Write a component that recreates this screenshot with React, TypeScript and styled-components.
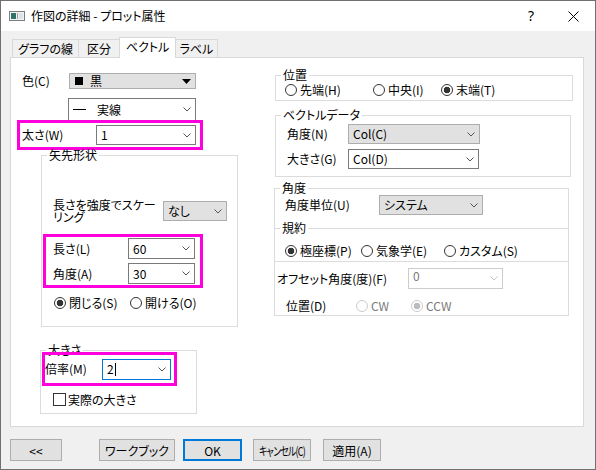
import React from "react";
import styled, { createGlobalStyle, css } from "styled-components";

type Tone = "gray" | "white" | "disabled" | "focus";

const GlobalStyle = createGlobalStyle`
  html, body {
    margin: 0;
    padding: 0;
    background: #ffffff;
  }
  body {
    font-family: "Noto Sans CJK JP", "Noto Sans", sans-serif;
    font-size: 12px;
    color: #000;
    font-feature-settings: "palt";
  }
  * {
    box-sizing: border-box;
  }
`;

const Window = styled.div`
  width: 596px;
  height: 470px;
  border: 1px solid #707070;
  background: #f0f0f0;
  display: flex;
  flex-direction: column;
`;

const TitleBar = styled.div`
  height: 30px;
  flex-shrink: 0;
  background: #ffffff;
  display: flex;
  align-items: center;
`;

const IconSvg = styled.svg`
  margin-left: 8px;
  flex-shrink: 0;
`;

const Title = styled.span`
  margin-left: 6px;
  font-size: 12px;
  line-height: 14px;
`;

const HelpGlyph = styled.span`
  margin-left: auto;
  font-family: "Noto Sans", sans-serif;
  font-size: 14px;
  line-height: 14px;
`;

const CloseSvg = styled.svg`
  margin: 0 16px 0 34px;
  flex-shrink: 0;
`;

const Body = styled.div`
  flex: 1;
  display: flex;
  flex-direction: column;
  padding: 6px 0 0 9px;
`;

const TabStrip = styled.div`
  height: 20px;
  display: flex;
  align-items: flex-end;
  padding-left: 2px;
`;

const Tab = styled.div<{ $w: number; $active?: boolean }>`
  width: ${(p) => p.$w}px;
  height: 18px;
  margin-left: -1px;
  border: 1px solid #d9d9d9;
  border-bottom: none;
  background: #f0f0f0;
  display: flex;
  align-items: center;
  justify-content: center;
  line-height: 14px;
  white-space: nowrap;

  &:first-child {
    margin-left: 0;
  }

  ${(p) =>
    p.$active &&
    css`
      position: relative;
      z-index: 1;
      height: 21px;
      margin-bottom: -1px;
      padding-bottom: 3px;
      background: #ffffff;
    `}
`;

const Panel = styled.div`
  width: 574px;
  height: 370px;
  border: 1px solid #d9d9d9;
  background: #ffffff;
  display: flex;
`;

const LeftCol = styled.div`
  width: 263px;
  flex-shrink: 0;
  display: flex;
  flex-direction: column;
`;

const RightCol = styled.div`
  flex: 1;
  display: flex;
  flex-direction: column;
`;

const Row = styled.div<{ $mt?: number; $ml?: number; $h?: number; $w?: number }>`
  display: flex;
  align-items: center;
  margin-top: ${(p) => p.$mt ?? 0}px;
  margin-left: ${(p) => p.$ml ?? 0}px;
  height: ${(p) => (p.$h ? `${p.$h}px` : "auto")};
  width: ${(p) => (p.$w ? `${p.$w}px` : "auto")};
  flex-shrink: 0;
`;

const Highlight = styled(Row)`
  outline: 3px solid #ff00dc;
`;

const HighlightStack = styled.div<{ $mt: number; $ml: number; $w: number; $h: number }>`
  margin: ${(p) => p.$mt}px 0 0 ${(p) => p.$ml}px;
  width: ${(p) => p.$w}px;
  height: ${(p) => p.$h}px;
  padding: 1px 0;
  display: flex;
  flex-direction: column;
  gap: 4px;
  outline: 3px solid #ff00dc;
  flex-shrink: 0;
`;

const Label = styled.span<{ $w: number; $pl?: number }>`
  width: ${(p) => p.$w}px;
  padding-left: ${(p) => p.$pl ?? 0}px;
  flex-shrink: 0;
  line-height: 14px;
  white-space: nowrap;
`;

const WrapLabel = styled.span<{ $w: number }>`
  width: ${(p) => p.$w}px;
  flex-shrink: 0;
  line-height: 12px;
  white-space: nowrap;
`;

const Group = styled.fieldset<{ $mt: number; $ml: number; $w: number; $h: number }>`
  margin: ${(p) => p.$mt}px 0 0 ${(p) => p.$ml}px;
  width: ${(p) => p.$w}px;
  height: ${(p) => p.$h}px;
  min-width: 0;
  padding: 0;
  border: 1px solid #dcdcdc;
  display: flex;
  flex-direction: column;
  flex-shrink: 0;
`;

const Legend = styled.legend`
  margin-left: 5px;
  padding: 0 2px;
  line-height: 14px;
  font-size: 12px;
`;

const toneStyles: Record<Tone, ReturnType<typeof css>> = {
  gray: css`
    background: #e1e1e1;
    border-color: #adadad;
  `,
  white: css`
    background: #ffffff;
    border-color: #7a7a7a;
  `,
  disabled: css`
    background: #ffffff;
    border-color: #cccccc;
    color: #7a7a7a;
  `,
  focus: css`
    background: #ffffff;
    border-color: #0078d7;
  `,
};

const ComboBox = styled.div<{ $w: number; $h: number; $tone: Tone }>`
  width: ${(p) => p.$w}px;
  height: ${(p) => p.$h}px;
  flex-shrink: 0;
  border: 1px solid;
  display: flex;
  align-items: center;
  padding-left: 4px;
  ${(p) => toneStyles[p.$tone]}
`;

const ComboText = styled.span<{ $raise?: boolean }>`
  flex: 1;
  display: flex;
  align-items: center;
  line-height: 14px;
  white-space: nowrap;
  padding-bottom: ${(p) => (p.$raise ? 5 : 0)}px;
`;

const ArrowBox = styled.span`
  width: 17px;
  align-self: stretch;
  display: flex;
  align-items: center;
  justify-content: center;
  flex-shrink: 0;
`;

const Swatch = styled.span`
  width: 8px;
  height: 8px;
  background: #000;
  margin: 0 7px 0 1px;
`;

const LineSample = styled.span`
  width: 13px;
  height: 1px;
  background: #000;
  margin-right: 11px;
`;

const Caret = styled.span`
  display: inline-block;
  width: 1px;
  height: 13px;
  background: #000;
  margin-left: 1px;
`;

const RadioItem = styled.span<{ $w?: number; $disabled?: boolean }>`
  display: inline-flex;
  align-items: center;
  width: ${(p) => (p.$w ? `${p.$w}px` : "auto")};
  flex-shrink: 0;
  line-height: 14px;
  white-space: nowrap;
  color: ${(p) => (p.$disabled ? "#7a7a7a" : "#000")};
`;

const RadioDot = styled.span<{ $checked?: boolean; $disabled?: boolean }>`
  width: 12px;
  height: 12px;
  border-radius: 50%;
  flex-shrink: 0;
  margin-right: 3px;
  border: 1px solid ${(p) => (p.$disabled ? "#cccccc" : "#333333")};
  background: ${(p) =>
    p.$checked
      ? `radial-gradient(circle, ${p.$disabled ? "#bcbcbc" : "#333333"} 0 3px, #ffffff 3.6px)`
      : "#ffffff"};
`;

const CheckBox = styled.span`
  width: 13px;
  height: 13px;
  border: 1px solid #333333;
  background: #ffffff;
  margin-right: 2px;
  flex-shrink: 0;
`;

const Footer = styled.div`
  display: flex;
  margin-top: 12px;
`;

const Button = styled.button<{ $w: number; $ml: number; $default?: boolean }>`
  width: ${(p) => p.$w}px;
  height: 22px;
  margin-left: ${(p) => p.$ml}px;
  padding: 0;
  font: inherit;
  font-size: 12px;
  color: #000;
  background: #e1e1e1;
  border: ${(p) => (p.$default ? "2px solid #0078d7" : "1px solid #adadad")};
  white-space: nowrap;
  display: flex;
  align-items: center;
  justify-content: center;
  overflow: hidden;
`;

const Condensed = styled.span`
  display: inline-block;
  flex-shrink: 0;
  font-size: 12px;
  letter-spacing: -1px;
  transform: scaleX(0.74);
`;

const Chevron = ({ color = "#555" }: { color?: string }) => (
  <svg width="8" height="5" viewBox="0 0 8 5">
    <polyline points="0.5,0.5 4,4 7.5,0.5" fill="none" stroke={color} strokeWidth="1" />
  </svg>
);

const SolidArrow = () => (
  <svg width="9" height="5" viewBox="0 0 9 5">
    <polygon points="0,0 9,0 4.5,5" fill="#000" />
  </svg>
);

interface ComboProps {
  w: number;
  h?: number;
  tone?: Tone;
  solid?: boolean;
  raise?: boolean;
  children?: React.ReactNode;
}

const Combo: React.FC<ComboProps> = ({ w, h = 20, tone = "white", solid, raise, children }) => (
  <ComboBox $w={w} $h={h} $tone={tone}>
    <ComboText $raise={raise}>{children}</ComboText>
    <ArrowBox>{solid ? <SolidArrow /> : <Chevron color={tone === "disabled" ? "#c4c4c4" : "#555"} />}</ArrowBox>
  </ComboBox>
);

interface RadioProps {
  w?: number;
  checked?: boolean;
  disabled?: boolean;
  children: React.ReactNode;
}

const Radio: React.FC<RadioProps> = ({ w, checked, disabled, children }) => (
  <RadioItem $w={w} $disabled={disabled}>
    <RadioDot $checked={checked} $disabled={disabled} />
    {children}
  </RadioItem>
);

export default function App() {
  return (
    <>
      <GlobalStyle />
      <Window>
        <TitleBar>
          <IconSvg width="16" height="10" viewBox="0 0 16 10">
            <rect x="0.5" y="0.5" width="15" height="9" fill="#f4f4f4" stroke="#7d7d7d" />
            <rect x="2" y="2" width="5" height="6" fill="#2f7466" />
            <rect x="8" y="2" width="1" height="6" fill="#9a9a9a" />
            <rect x="10" y="2" width="4" height="6" fill="#d9e4ea" />
          </IconSvg>
          <Title>作図の詳細 - プロット属性</Title>
          <HelpGlyph>?</HelpGlyph>
          <CloseSvg width="11" height="11" viewBox="0 0 11 11">
            <line x1="0.5" y1="0.5" x2="10.5" y2="10.5" stroke="#000" strokeWidth="1" />
            <line x1="10.5" y1="0.5" x2="0.5" y2="10.5" stroke="#000" strokeWidth="1" />
          </CloseSvg>
        </TitleBar>

        <Body>
          <TabStrip>
            <Tab $w={67}>グラフの線</Tab>
            <Tab $w={42}>区分</Tab>
            <Tab $w={57} $active>
              ベクトル
            </Tab>
            <Tab $w={43}>ラベル</Tab>
          </TabStrip>

          <Panel>
            <LeftCol>
              <Row $mt={15} $ml={11}>
                <Label $w={47}>色(C)</Label>
                <Combo w={127} h={16} tone="gray" solid>
                  <Swatch />黒
                </Combo>
              </Row>
              <Row $mt={9} $ml={57}>
                <Combo w={128} h={23}>
                  <LineSample />実線
                </Combo>
              </Row>
              <Highlight $mt={2} $ml={9} $w={180} $h={24}>
                <Label $w={76} $pl={2}>
                  太さ(W)
                </Label>
                <Combo w={100}>1</Combo>
              </Highlight>

              <Group $mt={1} $ml={30} $w={197} $h={179}>
                <Legend>矢先形状</Legend>
                <Row $mt={37} $ml={11} $h={24}>
                  <WrapLabel $w={110}>
                    長さを強度でスケー
                    <br />
                    リング
                  </WrapLabel>
                  <Combo w={64} tone="gray">
                    なし
                  </Combo>
                </Row>
                <HighlightStack $mt={14} $ml={4} $w={154} $h={48}>
                  <Row>
                    <Label $w={82} $pl={7}>
                      長さ(L)
                    </Label>
                    <Combo w={67} h={21}>
                      60
                    </Combo>
                  </Row>
                  <Row>
                    <Label $w={82} $pl={7}>
                      角度(A)
                    </Label>
                    <Combo w={67} h={21}>
                      30
                    </Combo>
                  </Row>
                </HighlightStack>
                <Row $mt={10} $ml={12} $h={16}>
                  <Radio w={76} checked>
                    閉じる(S)
                  </Radio>
                  <Radio>開ける(O)</Radio>
                </Row>
              </Group>

              <Group $mt={16} $ml={29} $w={157} $h={71}>
                <Legend>大きさ</Legend>
                <Highlight $mt={-2} $ml={4} $w={129} $h={28}>
                  <Label $w={57}>倍率(M)</Label>
                  <Combo w={69} h={21} tone="focus">
                    2<Caret />
                  </Combo>
                </Highlight>
                <Row $mt={10} $ml={12} $h={13}>
                  <CheckBox />
                  <Label $w={100}>実際の大きさ</Label>
                </Row>
              </Group>
            </LeftCol>

            <RightCol>
              <Group $mt={10} $ml={1} $w={298} $h={33}>
                <Legend>位置</Legend>
                <Row $mt={1} $ml={9} $h={13}>
                  <Radio w={88}>先端(H)</Radio>
                  <Radio w={68}>中央(I)</Radio>
                  <Radio checked>末端(T)</Radio>
                </Row>
              </Group>

              <Group $mt={7} $ml={1} $w={296} $h={69}>
                <Legend>ベクトルデータ</Legend>
                <Row $mt={2} $ml={11}>
                  <Label $w={61}>角度(N)</Label>
                  <Combo w={132} tone="gray">
                    Col(C)
                  </Combo>
                </Row>
                <Row $mt={5} $ml={11}>
                  <Label $w={61}>大きさ(G)</Label>
                  <Combo w={131}>Col(D)</Combo>
                </Row>
              </Group>

              <Group $mt={4} $ml={0} $w={295} $h={135}>
                <Legend>角度</Legend>
                <Row $mt={0} $ml={10}>
                  <Label $w={94}>角度単位(U)</Label>
                  <Combo w={104} tone="gray">
                    システム
                  </Combo>
                </Row>
                <Group $mt={6} $ml={-1} $w={295} $h={41}>
                  <Legend>規約</Legend>
                  <Row $mt={9} $ml={10} $h={13}>
                    <Radio w={76} checked>
                      極座標(P)
                    </Radio>
                    <Radio w={83}>気象学(E)</Radio>
                    <Radio>カスタム(S)</Radio>
                  </Row>
                </Group>
                <Row $mt={6} $ml={2}>
                  <Label $w={131}>オフセット角度(度)(F)</Label>
                  <Combo w={95} h={21} tone="disabled" raise>
                    0
                  </Combo>
                </Row>
                <Row $mt={10} $ml={11} $h={13}>
                  <Label $w={70}>位置(D)</Label>
                  <Radio w={55} disabled>
                    CW
                  </Radio>
                  <Radio checked disabled>
                    CCW
                  </Radio>
                </Row>
              </Group>
            </RightCol>
          </Panel>

          <Footer>
            <Button $w={52} $ml={0}>
              &lt;&lt;
            </Button>
            <Button $w={76} $ml={37}>
              ワークブック
            </Button>
            <Button $w={59} $ml={8} $default>
              OK
            </Button>
            <Button $w={58} $ml={11}>
              <Condensed>キャンセル(C)</Condensed>
            </Button>
            <Button $w={58} $ml={12}>
              適用(A)
            </Button>
          </Footer>
        </Body>
      </Window>
    </>
  );
}
